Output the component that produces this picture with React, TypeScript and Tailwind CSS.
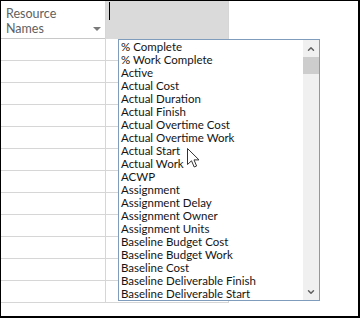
import { ChevronDown, ChevronUp } from "lucide-react";

const fields = [
  "% Complete",
  "% Work Complete",
  "Active",
  "Actual Cost",
  "Actual Duration",
  "Actual Finish",
  "Actual Overtime Cost",
  "Actual Overtime Work",
  "Actual Start",
  "Actual Work",
  "ACWP",
  "Assignment",
  "Assignment Delay",
  "Assignment Owner",
  "Assignment Units",
  "Baseline Budget Cost",
  "Baseline Budget Work",
  "Baseline Cost",
  "Baseline Deliverable Finish",
  "Baseline Deliverable Start",
];

const rows = Array.from({ length: 12 }, (_, i) => i);

const App = () => {
  return (
    <div
      className="relative w-[360px] h-[318px] overflow-hidden bg-white border-t border-l border-r-2 border-b-2 border-black"
      style={{ fontFamily: "Lato, 'Open Sans', sans-serif" }}
    >
      <div className="flex">
        {/* Resource Names column */}
        <div className="w-[104px] shrink-0">
          <div className="relative h-[38px] border-b border-[#c8c8c8] pl-[5px] pt-[5px] text-[12.5px] leading-[15px] text-[#606060]">
            <div>Resource</div>
            <div>Names</div>
            <div className="absolute left-[92px] top-[26px] w-0 h-0 border-l-[4px] border-r-[4px] border-t-[4px] border-l-transparent border-r-transparent border-t-[#7a7a7a]" />
          </div>
          {rows.map((r) => (
            <div key={r} className="h-[22px] border-b border-[#d6d6d6]" />
          ))}
        </div>

        {/* Add new column */}
        <div className="w-[124px] shrink-0 border-l border-r border-[#d6d6d6]">
          <div className="h-[38px] bg-[#dadada] border-b border-[#dadada] pl-[3px] pt-[1px]">
            <div className="w-px h-[18px] bg-black" />
          </div>
          {rows.map((r) => (
            <div key={r} className="h-[22px] border-b border-[#d6d6d6]" />
          ))}
        </div>
      </div>

      {/* Field dropdown list */}
      <div className="absolute left-[117px] top-[38px] w-[202px] h-[262px] border border-[#7f9cbc] bg-white flex">
        <div className="flex-1 pl-[2px] text-[11.5px] leading-[13px] text-[#141414]">
          {fields.map((f) => (
            <div key={f} className="whitespace-nowrap">
              {f}
            </div>
          ))}
        </div>
        <div className="w-[16px] bg-[#f0f0f0] flex flex-col">
          <div className="h-[17px] flex items-center justify-center text-[#606060]">
            <ChevronUp size={10} strokeWidth={3.5} />
          </div>
          <div className="h-[17px] bg-[#cdcdcd]" />
          <div className="flex-1" />
          <div className="h-[17px] flex items-center justify-center text-[#606060]">
            <ChevronDown size={10} strokeWidth={3.5} />
          </div>
        </div>
      </div>

      {/* Mouse pointer */}
      <svg
        className="absolute left-[186px] top-[147px]"
        width="13"
        height="21"
        viewBox="0 0 13 21"
      >
        <path
          d="M0.5 0.5 L0.5 16.5 L4.5 12.8 L7.2 19 L9.6 18 L7 11.9 L12 11.9 Z"
          fill="white"
          stroke="#333"
          strokeWidth="1"
          strokeLinejoin="round"
        />
      </svg>
    </div>
  );
};

export default App;
